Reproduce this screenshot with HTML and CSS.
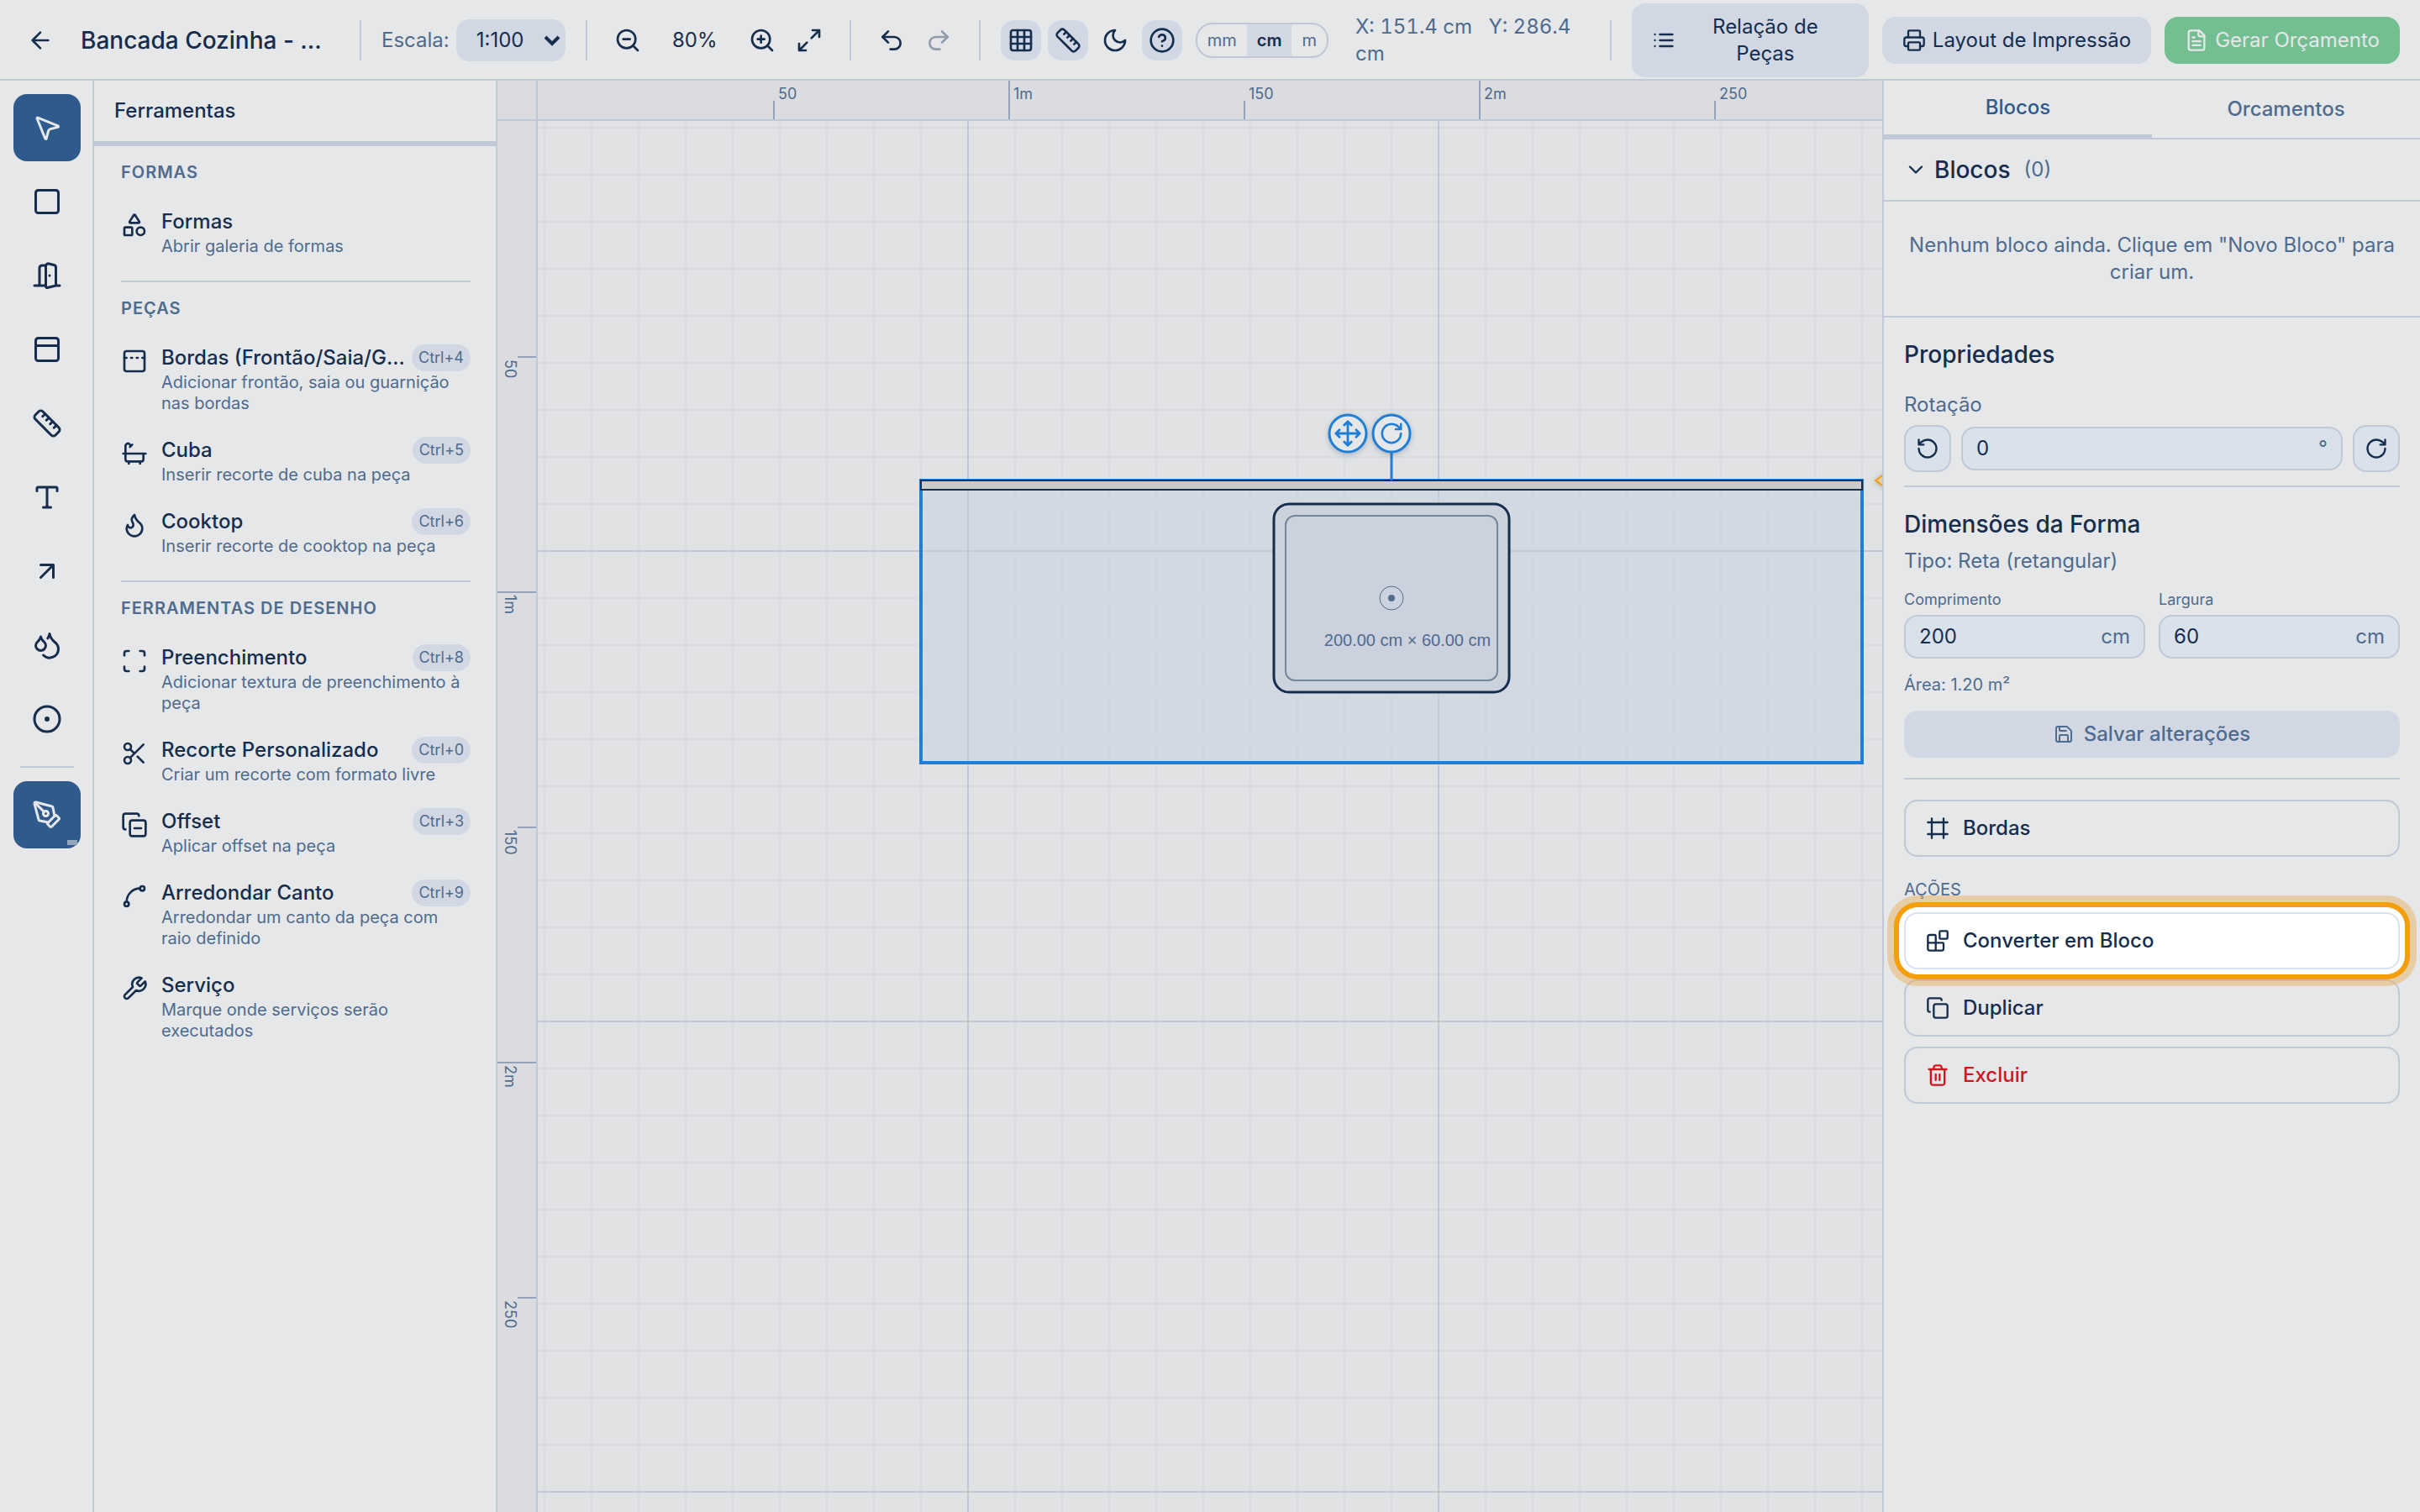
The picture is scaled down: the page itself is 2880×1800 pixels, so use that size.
FILE: index.html
```html
<!DOCTYPE html>
<html lang="pt-BR">
<head>
  <meta charset="UTF-8">
  <title>Bancada Cozinha</title>
  <meta name="viewport" content="width=device-width, initial-scale=1">
  <link rel="stylesheet" href="styles.css">
</head>
<body>

  <!-- Barra superior -->
  <header class="topbar">
    <div class="group title-group">
      <button type="button" class="icon-btn" aria-label="Voltar"><svg class="icon" viewBox="0 0 24 24"><path d="m12 19-7-7 7-7M19 12H5"/></svg></button>
      <h1 class="project-name">Bancada Cozinha - ...</h1>
    </div>
    <span class="sep"></span>
    <div class="group">
      <label class="scale-label" for="escala">Escala:</label>
      <div class="select-wrap">
        <select id="escala"><option>1:100</option><option>1:50</option><option>1:20</option></select>
        <svg class="select-arrow" viewBox="0 0 20 14"><path d="m2 3 8 8 8-8"/></svg>
      </div>
    </div>
    <span class="sep"></span>
    <div class="group">
      <button type="button" class="icon-btn" aria-label="Diminuir zoom"><svg class="icon" viewBox="0 0 24 24"><circle cx="11" cy="11" r="8"/><path d="m21 21-4.35-4.35M8 11h6"/></svg></button>
      <span class="zoom-value">80%</span>
      <button type="button" class="icon-btn" aria-label="Aumentar zoom"><svg class="icon" viewBox="0 0 24 24"><circle cx="11" cy="11" r="8"/><path d="m21 21-4.35-4.35M8 11h6M11 8v6"/></svg></button>
      <button type="button" class="icon-btn" aria-label="Ajustar à tela"><svg class="icon" viewBox="0 0 24 24"><path d="M15 3h6v6M9 21H3v-6M21 3l-7 7M3 21l7-7"/></svg></button>
    </div>
    <span class="sep"></span>
    <div class="group">
      <button type="button" class="icon-btn" aria-label="Desfazer"><svg class="icon" viewBox="0 0 24 24"><path d="M9 14 4 9l5-5"/><path d="M4 9h10.500a5.500 5.500 0 0 1 0 11H11"/></svg></button>
      <button type="button" class="icon-btn" aria-label="Refazer" disabled><svg class="icon" viewBox="0 0 24 24"><path d="m15 14 5-5-5-5"/><path d="M20 9H9.500a5.500 5.500 0 0 0 0 11H13"/></svg></button>
    </div>
    <span class="sep"></span>
    <div class="group">
      <button type="button" class="icon-btn on" aria-label="Grade"><svg class="icon" viewBox="0 0 24 24"><rect x="3" y="3" width="18" height="18" rx="2"/><path d="M3 9h18M3 15h18M9 3v18M15 3v18"/></svg></button>
      <button type="button" class="icon-btn on" aria-label="Réguas"><svg class="icon" viewBox="0 0 24 24"><path d="M21.3 15.3a2.4 2.4 0 0 1 0 3.4l-2.6 2.6a2.4 2.4 0 0 1-3.4 0L2.7 8.7a2.410 2.410 0 0 1 0-3.400l2.600-2.600a2.410 2.410 0 0 1 3.400 0Z"/><path d="m14.500 12.500 2-2M11.500 9.500l2-2M8.500 6.500l2-2M17.500 15.500l2-2"/></svg></button>
      <button type="button" class="icon-btn" aria-label="Tema escuro"><svg class="icon" viewBox="0 0 24 24"><path d="M12 3a6 6 0 0 0 9 9 9 9 0 1 1-9-9Z"/></svg></button>
      <button type="button" class="icon-btn on" aria-label="Ajuda"><svg class="icon" viewBox="0 0 24 24"><circle cx="12" cy="12" r="10"/><path d="M9.090 9a3 3 0 0 1 5.830 1c0 2-3 3-3 3M12 17h.01"/></svg></button>
      <div class="units">
        <button type="button">mm</button><button type="button" class="active">cm</button><button type="button">m</button>
      </div>
    </div>
    <p class="coords">X: 151.4 cm &nbsp; Y: 286.4 cm</p>
    <span class="sep"></span>
    <div class="group actions">
      <button type="button" class="btn parts-btn"><svg class="icon sm" viewBox="0 0 24 24"><path d="M8 6h13M8 12h13M8 18h13M3 6h.01M3 12h.01M3 18h.01"/></svg><span>Relação de Peças</span></button>
      <button type="button" class="btn"><svg class="icon sm" viewBox="0 0 24 24"><path d="M6 18H4a2 2 0 0 1-2-2v-5a2 2 0 0 1 2-2h16a2 2 0 0 1 2 2v5a2 2 0 0 1-2 2h-2"/><path d="M6 9V3a1 1 0 0 1 1-1h10a1 1 0 0 1 1 1v6"/><rect x="6" y="14" width="12" height="8" rx="1"/></svg><span>Layout de Impressão</span></button>
      <button type="button" class="btn green"><svg class="icon sm" viewBox="0 0 24 24"><path d="M15 2H6a2 2 0 0 0-2 2v16a2 2 0 0 0 2 2h12a2 2 0 0 0 2-2V7Z"/><path d="M14 2v4a2 2 0 0 0 2 2h4M10 9H8M16 13H8M16 17H8"/></svg><span>Gerar Orçamento</span></button>
    </div>
  </header>

  <main class="workspace">

    <!-- Ferramentas rápidas -->
    <nav class="toolbar" aria-label="Ferramentas rápidas">
      <button type="button" class="tool active" aria-label="Selecionar"><svg class="icon lg" viewBox="0 0 24 24"><path d="M4.037 4.688a.495.495 0 0 1 .651-.651l16 6.500a.5.5 0 0 1-.063.947l-6.124 1.580a2 2 0 0 0-1.438 1.435l-1.579 6.126a.5.5 0 0 1-.947.063z"/></svg></button>
      <button type="button" class="tool" aria-label="Retângulo"><svg class="icon lg" viewBox="0 0 24 24"><rect x="3" y="3" width="18" height="18" rx="2"/></svg></button>
      <button type="button" class="tool" aria-label="Porta"><svg class="icon lg" viewBox="0 0 24 24"><path d="M11 20H2M11 4.562v16.157a1 1 0 0 0 1.242.97L19 20V5.562a2 2 0 0 0-1.515-1.940l-4-1A2 2 0 0 0 11 4.561zM11 4H8a2 2 0 0 0-2 2v14M14 12h.01M22 20h-3"/></svg></button>
      <button type="button" class="tool" aria-label="Janela"><svg class="icon lg" viewBox="0 0 24 24"><rect x="3" y="3" width="18" height="18" rx="2"/><path d="M3 9h18"/></svg></button>
      <button type="button" class="tool" aria-label="Medir"><svg class="icon lg" viewBox="0 0 24 24"><path d="M21.300 15.300a2.400 2.400 0 0 1 0 3.400l-2.600 2.600a2.400 2.400 0 0 1-3.400 0L2.700 8.700a2.410 2.410 0 0 1 0-3.400l2.600-2.600a2.410 2.410 0 0 1 3.400 0Z"/><path d="m14.500 12.500 2-2M11.500 9.500l2-2M8.500 6.500l2-2M17.500 15.500l2-2"/></svg></button>
      <button type="button" class="tool" aria-label="Texto"><svg class="icon lg" viewBox="0 0 24 24"><path d="M12 4v16M4 7V5a1 1 0 0 1 1-1h14a1 1 0 0 1 1 1v2M9 20h6"/></svg></button>
      <button type="button" class="tool" aria-label="Seta"><svg class="icon lg" viewBox="0 0 24 24"><path d="M7 7h10v10M7 17 17 7"/></svg></button>
      <button type="button" class="tool" aria-label="Área molhada"><svg class="icon lg" viewBox="0 0 24 24"><path d="M7 16.300c2.200 0 4-1.830 4-4.050 0-1.160-.57-2.260-1.710-3.190S7.290 6.750 7 5.300c-.29 1.450-1.140 2.840-2.290 3.760S3 11.100 3 12.250c0 2.220 1.800 4.050 4 4.050z"/><path d="M12.560 6.600A10.970 10.970 0 0 0 14 3.020c.5 2.500 2 4.900 4 6.500s3 3.500 3 5.500a6.980 6.980 0 0 1-11.910 4.970"/></svg></button>
      <button type="button" class="tool" aria-label="Furo"><svg class="icon lg" viewBox="0 0 24 24"><circle cx="12" cy="12" r="10"/><circle cx="12" cy="12" r="1"/></svg></button>
      <hr>
      <button type="button" class="tool active more" aria-label="Mais ferramentas"><svg class="icon lg" viewBox="0 0 24 24"><path d="M15.707 21.293a1 1 0 0 1-1.414 0l-1.586-1.586a1 1 0 0 1 0-1.414l5.586-5.586a1 1 0 0 1 1.414 0l1.586 1.586a1 1 0 0 1 0 1.414z"/><path d="m18 13-1.375-6.874a1 1 0 0 0-.746-.776L3.235 2.028a1 1 0 0 0-1.207 1.207L5.350 15.879a1 1 0 0 0 .776.746L13 18"/><path d="m2.300 2.300 7.286 7.286"/><circle cx="11" cy="11" r="2"/></svg></button>
    </nav>

    <!-- Painel de ferramentas -->
    <aside class="tools-panel">
      <h2 class="panel-title">Ferramentas</h2>
      <div class="tools-body">
        <section class="tool-section">
          <h3>FORMAS</h3>
          <button type="button" class="tool-item">
            <svg class="icon" viewBox="0 0 24 24"><path d="M8.300 10a.7.7 0 0 1-.626-1.079L11.400 3a.7.7 0 0 1 1.198-.043L16.300 8.900a.7.7 0 0 1-.572 1.100Z"/><rect x="3" y="14" width="7" height="7" rx="1"/><circle cx="17.500" cy="17.500" r="3.500"/></svg>
            <span class="item-text"><span class="item-head"><span class="item-name">Formas</span></span><span class="item-desc">Abrir galeria de formas</span></span>
          </button>
        </section>
        <section class="tool-section">
          <h3>PEÇAS</h3>
          <button type="button" class="tool-item">
            <svg class="icon" viewBox="0 0 24 24"><rect x="3" y="3" width="18" height="18" rx="2"/><path d="M14 9h1M19 9h2M3 9h2M9 9h1"/></svg>
            <span class="item-text"><span class="item-head"><span class="item-name">Bordas (Frontão/Saia/G...</span><kbd>Ctrl+4</kbd></span><span class="item-desc">Adicionar frontão, saia ou guarnição nas bordas</span></span>
          </button>
          <button type="button" class="tool-item">
            <svg class="icon" viewBox="0 0 24 24"><path d="M10 4 8 6M17 19v2M2 12h20M7 19v2M9 5 7.621 3.621A2.121 2.121 0 0 0 4 5v12a2 2 0 0 0 2 2h12a2 2 0 0 0 2-2v-5"/></svg>
            <span class="item-text"><span class="item-head"><span class="item-name">Cuba</span><kbd>Ctrl+5</kbd></span><span class="item-desc">Inserir recorte de cuba na peça</span></span>
          </button>
          <button type="button" class="tool-item">
            <svg class="icon" viewBox="0 0 24 24"><path d="M8.500 14.500A2.500 2.500 0 0 0 11 12c0-1.380-.5-2-1-3-1.072-2.143-.224-4.054 2-6 .5 2.500 2 4.900 4 6.500 2 1.600 3 3.500 3 5.500a7 7 0 1 1-14 0c0-1.153.433-2.294 1-3a2.500 2.500 0 0 0 2.500 2.500z"/></svg>
            <span class="item-text"><span class="item-head"><span class="item-name">Cooktop</span><kbd>Ctrl+6</kbd></span><span class="item-desc">Inserir recorte de cooktop na peça</span></span>
          </button>
        </section>
        <section class="tool-section">
          <h3>FERRAMENTAS DE DESENHO</h3>
          <button type="button" class="tool-item">
            <svg class="icon" viewBox="0 0 24 24"><path d="M3 7V5a2 2 0 0 1 2-2h2M17 3h2a2 2 0 0 1 2 2v2M21 17v2a2 2 0 0 1-2 2h-2M7 21H5a2 2 0 0 1-2-2v-2"/></svg>
            <span class="item-text"><span class="item-head"><span class="item-name">Preenchimento</span><kbd>Ctrl+8</kbd></span><span class="item-desc">Adicionar textura de preenchimento à peça</span></span>
          </button>
          <button type="button" class="tool-item">
            <svg class="icon" viewBox="0 0 24 24"><circle cx="6" cy="6" r="3"/><path d="M8.120 8.120 12 12M20 4 8.120 15.880"/><circle cx="6" cy="18" r="3"/><path d="M14.800 14.800 20 20"/></svg>
            <span class="item-text"><span class="item-head"><span class="item-name">Recorte Personalizado</span><kbd>Ctrl+0</kbd></span><span class="item-desc">Criar um recorte com formato livre</span></span>
          </button>
          <button type="button" class="tool-item">
            <svg class="icon" viewBox="0 0 24 24"><path d="M12 15h6"/><rect x="8" y="8" width="14" height="14" rx="2"/><path d="M4 16c-1.100 0-2-.9-2-2V4c0-1.100.9-2 2-2h10c1.100 0 2 .9 2 2"/></svg>
            <span class="item-text"><span class="item-head"><span class="item-name">Offset</span><kbd>Ctrl+3</kbd></span><span class="item-desc">Aplicar offset na peça</span></span>
          </button>
          <button type="button" class="tool-item">
            <svg class="icon" viewBox="0 0 24 24"><circle cx="19" cy="5" r="2"/><circle cx="5" cy="19" r="2"/><path d="M5 17A12 12 0 0 1 17 5"/></svg>
            <span class="item-text"><span class="item-head"><span class="item-name">Arredondar Canto</span><kbd>Ctrl+9</kbd></span><span class="item-desc">Arredondar um canto da peça com raio definido</span></span>
          </button>
          <button type="button" class="tool-item">
            <svg class="icon" viewBox="0 0 24 24"><path d="M14.700 6.300a1 1 0 0 0 0 1.400l1.600 1.600a1 1 0 0 0 1.400 0l3.770-3.770a6 6 0 0 1-7.940 7.940l-6.910 6.910a2.120 2.120 0 0 1-3-3l6.910-6.910a6 6 0 0 1 7.940-7.940l-3.760 3.760z"/></svg>
            <span class="item-text"><span class="item-head"><span class="item-name">Serviço</span></span><span class="item-desc">Marque onde serviços serão executados</span></span>
          </button>
        </section>
      </div>
    </aside>

    <!-- Área de desenho com réguas -->
    <section class="stage" aria-label="Área de desenho">
      <div class="ruler-corner"></div>
      <svg class="ruler ruler-top">
        <path class="tick" d="M281 24v24M561 0v48M841 24v24M1121 0v48M1401 24v24"/>
        <text x="286" y="22">50</text>
        <text x="566" y="22">1m</text>
        <text x="846" y="22">150</text>
        <text x="1126" y="22">2m</text>
        <text x="1406" y="22">250</text>
      </svg>
      <svg class="ruler ruler-left">
        <path class="tick" d="M24 281h24M0 561h48M24 841h24M0 1121h48M24 1401h24"/>
        <text transform="translate(9 284) rotate(90)">50</text>
        <text transform="translate(9 564) rotate(90)">1m</text>
        <text transform="translate(9 844) rotate(90)">150</text>
        <text transform="translate(9 1124) rotate(90)">2m</text>
        <text transform="translate(9 1404) rotate(90)">250</text>
      </svg>
      <svg class="canvas">
        <defs>
          <pattern id="gridMinor" x="-20" y="-20" width="56" height="56" patternUnits="userSpaceOnUse"><path class="grid-minor" d="M28 0v56M0 28h56"/></pattern>
          <pattern id="gridMajor" x="232" y="232" width="560" height="560" patternUnits="userSpaceOnUse"><path class="grid-major" d="M280 0v560M0 280h560"/></pattern>
        </defs>
        <rect width="100%" height="100%" fill="url(#gridMinor)"/>
        <rect width="100%" height="100%" fill="url(#gridMajor)"/>

        <!-- bancada -->
        <rect class="piece" x="456" y="428" width="1120" height="336"/>
        <rect class="backsplash" x="456" y="428" width="1120" height="11"/>

        <!-- cuba -->
        <rect class="sink" x="876" y="456" width="280" height="224" rx="18"/>
        <rect class="sink-inner" x="890" y="470" width="252" height="196" rx="11"/>
        <circle class="drain" cx="1016" cy="568" r="14"/>
        <circle class="drain-dot" cx="1016" cy="568" r="4"/>
        <text class="measure" x="1035" y="625">200.00 cm × 60.00 cm</text>

        <!-- alças de mover e girar -->
        <path class="handle-line" d="M1016 394v34"/>
        <circle class="handle" cx="964" cy="372" r="22"/>
        <circle class="handle" cx="1016" cy="372" r="22"/>
        <svg class="handle-icon" x="947" y="355" width="34" height="34" viewBox="0 0 24 24"><path d="M12 2v20M2 12h20M15 19l-3 3-3-3M19 9l3 3-3 3M5 9l-3 3 3 3M9 5l3-3 3 3"/></svg>
        <svg class="handle-icon" x="1001" y="357" width="30" height="30" viewBox="0 0 24 24"><path d="M21 12a9 9 0 1 1-9-9c2.520 0 4.930 1 6.740 2.740L21 8M21 3v5h-5"/></svg>
        <path class="marker" d="m1592 428 14-10 14 10-14 10z"/>
      </svg>
    </section>

    <!-- Painel direito -->
    <aside class="side-panel">
      <div class="tabs">
        <button type="button" class="tab active">Blocos</button>
        <button type="button" class="tab">Orcamentos</button>
      </div>
      <button type="button" class="blocks-head">
        <svg class="icon sm" viewBox="0 0 24 24"><path d="m6 9 6 6 6-6"/></svg>
        <span class="blocks-title">Blocos</span>
        <span class="blocks-count">(0)</span>
      </button>
      <p class="blocks-empty">Nenhum bloco ainda. Clique em "Novo Bloco" para criar um.</p>

      <div class="props">
        <h2>Propriedades</h2>
        <label class="prop-label" for="rotacao">Rotação</label>
        <div class="rotate-row">
          <button type="button" class="rotate-btn" aria-label="Girar à esquerda"><svg class="icon sm" viewBox="0 0 24 24"><path d="M3 12a9 9 0 1 0 9-9 9.750 9.750 0 0 0-6.740 2.740L3 8M3 3v5h5"/></svg></button>
          <div class="field"><input id="rotacao" type="text" value="0"><span>°</span></div>
          <button type="button" class="rotate-btn" aria-label="Girar à direita"><svg class="icon sm" viewBox="0 0 24 24"><path d="M21 12a9 9 0 1 1-9-9c2.520 0 4.930 1 6.740 2.740L21 8M21 3v5h-5"/></svg></button>
        </div>

        <div class="dimensions">
          <h2>Dimensões da Forma</h2>
          <p class="shape-type">Tipo: Reta (retangular)</p>
          <div class="size-row">
            <div class="size-col"><label for="comprimento">Comprimento</label><div class="field"><input id="comprimento" type="text" value="200"><span>cm</span></div></div>
            <div class="size-col"><label for="largura">Largura</label><div class="field"><input id="largura" type="text" value="60"><span>cm</span></div></div>
          </div>
          <p class="area">Área: 1.20 m²</p>
          <button type="button" class="save-btn" disabled><svg class="icon xs" viewBox="0 0 24 24"><path d="M15.200 3a2 2 0 0 1 1.400.6l3.800 3.800a2 2 0 0 1 .6 1.400V19a2 2 0 0 1-2 2H5a2 2 0 0 1-2-2V5a2 2 0 0 1 2-2z"/><path d="M17 21v-7a1 1 0 0 0-1-1H8a1 1 0 0 0-1 1v7M7 3v4a1 1 0 0 0 1 1h7"/></svg>Salvar alterações</button>
        </div>

        <div class="piece-actions">
          <button type="button" class="action"><svg class="icon sm" viewBox="0 0 24 24"><path d="M22 6H2M22 18H2M6 2v20M18 2v20"/></svg>Bordas</button>
          <h3>AÇÕES</h3>
          <button type="button" class="action highlight"><svg class="icon sm" viewBox="0 0 24 24"><rect x="14" y="2" width="8" height="8" rx="1"/><path d="M10 22V7a1 1 0 0 0-1-1H4a2 2 0 0 0-2 2v12a2 2 0 0 0 2 2h12a2 2 0 0 0 2-2v-5a1 1 0 0 0-1-1H2"/></svg>Converter em Bloco</button>
          <button type="button" class="action"><svg class="icon sm" viewBox="0 0 24 24"><rect x="8" y="8" width="14" height="14" rx="2"/><path d="M4 16c-1.100 0-2-.9-2-2V4c0-1.100.9-2 2-2h10c1.100 0 2 .9 2 2"/></svg>Duplicar</button>
          <button type="button" class="action danger"><svg class="icon sm" viewBox="0 0 24 24"><path d="M3 6h18M19 6v14c0 1-1 2-2 2H7c-1 0-2-1-2-2V6M8 6V4c0-1 1-2 2-2h4c1 0 2 1 2 2v2M10 11v6M14 11v6"/></svg>Excluir</button>
        </div>
      </div>
    </aside>
  </main>

</body>
</html>
```
FILE: styles.css
```css
:root {
  --bg: #e5e7e9;
  --canvas: #e0e2e4;
  --ruler: #dadce0;
  --line: #c0c8d5;
  --soft: #d1d8e4;
  --input: #d9e1ea;
  --text: #162d4d;
  --muted: #4f6b8e;
  --primary: #2f5a8c;
  --accent: #1f7fd6;
  --orange: #f59e0b;
}

* {
  box-sizing: border-box;
}

body {
  margin: 0;
  height: 100vh;
  display: flex;
  flex-direction: column;
  overflow: hidden;
  background: var(--bg);
  color: var(--text);
  font-family: Inter, "Liberation Sans", sans-serif;
  font-size: 24px;
  line-height: 32px;
}

h1, h2, h3, p {
  margin: 0;
}

button, input, select {
  font: inherit;
  color: inherit;
  border: none;
  background: none;
  padding: 0;
  margin: 0;
}

button {
  cursor: pointer;
}

/* Ícones */
.icon {
  width: 32px;
  height: 32px;
  flex: none;
  fill: none;
  stroke: currentColor;
  stroke-width: 2;
  stroke-linecap: round;
  stroke-linejoin: round;
}

.icon.xs {
  width: 24px;
  height: 24px;
}

.icon.sm {
  width: 28px;
  height: 28px;
}

.icon.lg {
  width: 36px;
  height: 36px;
}

/* Barra superior */
.topbar {
  display: flex;
  align-items: center;
  gap: 24px;
  height: 96px;
  flex: none;
  padding: 2px 24px 0;
  border-bottom: 2px solid var(--line);
}

.group {
  display: flex;
  align-items: center;
  gap: 8px;
  flex: none;
}

.title-group {
  gap: 24px;
  width: 380px;
}

.project-name {
  flex: 1;
  font-size: 28px;
  font-weight: 500;
  white-space: nowrap;
  overflow: hidden;
  text-overflow: ellipsis;
}

.sep {
  width: 2px;
  height: 48px;
  flex: none;
  background: var(--line);
}

.scale-label,
.coords {
  color: var(--muted);
}

.select-wrap {
  display: grid;
  align-items: center;
  width: 130px;
  height: 50px;
  border-radius: 16px;
  background: var(--soft);
}

.select-wrap select {
  grid-area: 1 / 1;
  width: 100%;
  height: 100%;
  padding-left: 24px;
  appearance: none;
}

.select-arrow {
  grid-area: 1 / 1;
  justify-self: end;
  width: 20px;
  height: 14px;
  margin-right: 6px;
  fill: none;
  stroke: currentColor;
  stroke-width: 4;
  pointer-events: none;
}

.icon-btn {
  display: flex;
  align-items: center;
  justify-content: center;
  width: 48px;
  height: 48px;
  border-radius: 16px;
}

.icon-btn.on {
  background: var(--soft);
}

.icon-btn:disabled {
  opacity: 0.4;
}

.zoom-value {
  width: 96px;
  text-align: center;
}

.units {
  display: flex;
  height: 42px;
  margin-left: 8px;
  border: 2px solid var(--line);
  border-radius: 20px;
  overflow: hidden;
  font-size: 20px;
  color: var(--muted);
}

.units button {
  padding: 0 12px;
}

.units .active {
  background: var(--soft);
  color: var(--text);
  font-weight: 600;
}

.coords {
  flex: 1;
  min-width: 0;
  padding-left: 8px;
  font-variant-numeric: tabular-nums;
}

.actions {
  gap: 16px;
}

.btn {
  display: flex;
  align-items: center;
  gap: 8px;
  padding: 12px 24px;
  border-radius: 16px;
  background: var(--soft);
}

.parts-btn {
  width: 282px;
}

.parts-btn span {
  flex: 1;
  padding: 0 24px;
}

.btn.green {
  background: #74bf92;
  color: var(--bg);
}

/* Corpo */
.workspace {
  flex: 1;
  min-height: 0;
  display: flex;
}

.toolbar {
  display: flex;
  flex-direction: column;
  align-items: center;
  gap: 8px;
  width: 112px;
  flex: none;
  padding: 16px 14px 0 16px;
  border-right: 2px solid var(--line);
}

.toolbar hr {
  width: 64px;
  height: 2px;
  margin: 8px 0;
  border: none;
  background: var(--line);
}

.tool {
  position: relative;
  display: flex;
  align-items: center;
  justify-content: center;
  width: 80px;
  height: 80px;
  border-radius: 16px;
}

.tool.active {
  background: var(--primary);
  color: var(--bg);
}

/* marca de submenu no canto */
.tool.more::after {
  content: "";
  position: absolute;
  right: 4px;
  bottom: 4px;
  width: 12px;
  height: 6px;
  background: #94a6bb;
}

/* Painel de ferramentas */
.tools-panel {
  width: 480px;
  flex: none;
  border-right: 2px solid var(--line);
}

.panel-title {
  padding: 20px 24px;
  border-bottom: 6px solid var(--line);
  font-size: 24px;
  font-weight: 500;
}

.tools-body {
  padding: 0 30px 0 32px;
}

.tool-section {
  display: flex;
  flex-direction: column;
  gap: 3px;
  padding: 16px 0;
}

.tool-section + .tool-section {
  border-top: 2px solid var(--line);
}

.tool-section h3 {
  margin-bottom: 13px;
  font-size: 20px;
  line-height: 30px;
  font-weight: 600;
  letter-spacing: 1px;
  color: var(--muted);
}

.tool-item {
  display: flex;
  gap: 16px;
  padding: 12px 0;
  text-align: left;
}

.tool-item .icon {
  margin-top: 4px;
}

.item-text {
  flex: 1;
  min-width: 0;
}

.item-head {
  display: flex;
  align-items: center;
  justify-content: space-between;
  gap: 8px;
}

.item-name {
  font-weight: 500;
  white-space: nowrap;
  overflow: hidden;
}

.item-head kbd {
  flex: none;
  padding: 0 8px;
  border-radius: 16px;
  background: var(--soft);
  color: var(--muted);
  font-family: inherit;
  font-size: 18px;
}

.item-desc {
  display: block;
  margin-top: 1px;
  font-size: 20px;
  line-height: 25px;
  color: var(--muted);
}

/* Réguas e área de desenho */
.stage {
  flex: 1;
  min-width: 0;
  display: grid;
  grid-template: 48px 1fr / 48px 1fr;
}

.ruler-corner,
.ruler {
  width: 100%;
  height: 100%;
  background: var(--ruler);
}

.ruler-corner,
.ruler-left {
  border-right: 2px solid var(--line);
}

.ruler-corner,
.ruler-top {
  border-bottom: 2px solid var(--line);
}

.ruler text {
  font-size: 18px;
  fill: var(--muted);
}

.tick {
  stroke: #94a3b8;
  stroke-width: 2;
}

.canvas {
  width: 100%;
  height: 100%;
  background: var(--canvas);
}

.grid-minor {
  stroke: #d9dbdf;
  stroke-width: 2;
}

.grid-major {
  stroke: var(--line);
  stroke-width: 2;
}

.piece {
  fill: rgba(194, 206, 226, 0.45);
  stroke: var(--accent);
  stroke-width: 4;
}

.backsplash {
  fill: #cbcaca;
  stroke: var(--text);
  stroke-width: 2;
}

.sink {
  fill: #cbd1dd;
  stroke: var(--text);
  stroke-width: 3;
}

.sink-inner {
  fill: none;
  stroke: #74859c;
  stroke-width: 2;
}

.drain {
  fill: none;
  stroke: var(--muted);
  stroke-width: 1;
}

.drain-dot {
  fill: var(--muted);
}

.measure {
  font-family: "Liberation Sans", Arial, sans-serif;
  font-size: 20px;
  text-anchor: middle;
  fill: var(--muted);
}

.handle {
  fill: var(--bg);
  stroke: var(--accent);
  stroke-width: 3;
  filter: drop-shadow(0 2px 3px rgba(22, 45, 77, 0.25));
}

.handle-line {
  stroke: var(--accent);
  stroke-width: 3;
}

.handle-icon {
  fill: none;
  stroke: var(--accent);
  stroke-width: 2;
  stroke-linecap: round;
  stroke-linejoin: round;
}

.marker {
  fill: #e6cfa8;
  stroke: var(--orange);
  stroke-width: 2;
  filter: drop-shadow(0 1px 3px rgba(22, 45, 77, 0.25));
}

/* Painel direito */
.side-panel {
  width: 640px;
  flex: none;
  border-left: 2px solid var(--line);
}

.tabs {
  display: flex;
  height: 70px;
}

.tab {
  flex: 1;
  border-bottom: 2px solid var(--line);
  color: var(--muted);
  font-weight: 500;
}

.tab.active {
  border-bottom-width: 6px;
  color: var(--primary);
}

.blocks-head {
  display: flex;
  align-items: center;
  gap: 8px;
  width: 100%;
  height: 74px;
  padding: 0 24px;
  border-bottom: 2px solid var(--line);
}

.blocks-title {
  font-size: 28px;
  font-weight: 500;
}

.blocks-count {
  margin-left: 8px;
  color: var(--muted);
}

.blocks-empty {
  padding: 36px 24px;
  border-bottom: 2px solid var(--line);
  text-align: center;
  color: var(--muted);
}

.props {
  padding: 24px;
}

.props h2 {
  font-size: 28px;
  line-height: 40px;
  font-weight: 500;
}

.prop-label {
  display: block;
  margin: 24px 0 8px;
  color: var(--muted);
}

.rotate-row {
  display: flex;
  align-items: center;
  gap: 12px;
}

.rotate-btn {
  display: flex;
  align-items: center;
  justify-content: center;
  width: 56px;
  height: 56px;
  border: 2px solid var(--line);
  border-radius: 16px;
  background: var(--input);
}

.field {
  flex: 1;
  display: flex;
  align-items: center;
  height: 52px;
  padding: 0 16px;
  border: 2px solid var(--line);
  border-radius: 16px;
  background: var(--input);
}

.field input {
  flex: 1;
  width: 0;
}

.field span {
  color: var(--muted);
}

.dimensions {
  margin-top: 16px;
  padding: 24px 0;
  border-top: 2px solid var(--line);
}

.shape-type {
  margin-top: 8px;
  color: var(--muted);
}

.size-row {
  display: flex;
  gap: 16px;
  margin-top: 16px;
}

.size-col {
  flex: 1;
}

.size-col label {
  display: block;
  font-size: 18px;
  line-height: 28px;
  margin-bottom: 4px;
  color: var(--muted);
}

.area {
  margin: 16px 0;
  font-size: 20px;
  line-height: 30px;
  color: var(--muted);
}

.save-btn {
  display: flex;
  align-items: center;
  justify-content: center;
  gap: 12px;
  width: 100%;
  height: 56px;
  border-radius: 16px;
  background: var(--soft);
  color: var(--muted);
  font-weight: 500;
}

.piece-actions {
  display: flex;
  flex-direction: column;
  gap: 12px;
  padding-top: 24px;
  border-top: 2px solid var(--line);
}

.piece-actions h3 {
  margin-top: 12px;
  font-size: 20px;
  line-height: 30px;
  font-weight: 400;
  color: var(--muted);
}

.action {
  display: flex;
  align-items: center;
  gap: 16px;
  height: 68px;
  padding: 0 24px;
  border: 2px solid var(--line);
  border-radius: 16px;
  font-weight: 500;
}

/* passo atual do tutorial */
.action.highlight {
  position: relative;
  background: #fff;
  border-color: #d9e2ec;
  box-shadow:
    0 0 0 6px #fff,
    0 0 0 12px var(--orange),
    0 0 0 20px rgba(232, 168, 64, 0.4);
}

.action.danger {
  color: #d3151f;
}
```
